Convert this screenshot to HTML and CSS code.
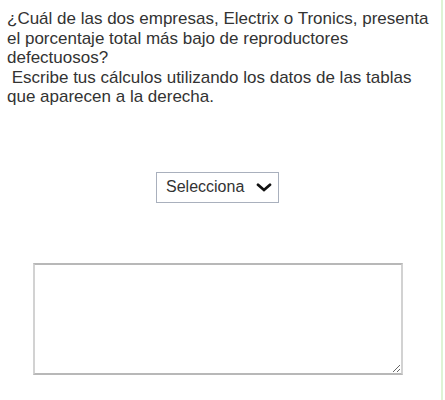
FILE: index.html
```html
<!DOCTYPE html>
<html lang="es">
<head>
    <meta charset="UTF-8">
    <meta name="viewport" content="width=device-width, initial-scale=1.0">
    <title>Pregunta</title>
    <link rel="stylesheet" href="styles.css">
</head>
<body>
    <div class="panel">
        <p class="question">¿Cuál de las dos empresas, Electrix o Tronics, presenta el porcentaje total más bajo de reproductores defectuosos?<br>&nbsp;Escribe tus cálculos utilizando los datos de las tablas que aparecen a la derecha.</p>

        <div class="answer">
            <div class="select-box">
                <span>Selecciona</span>
                <svg class="chevron" width="16" height="9" viewBox="0 0 16 9">
                    <path d="M2 1.8 L8 7 L14 1.8" fill="none" stroke="#111" stroke-width="2.8" stroke-linecap="round" stroke-linejoin="miter"/>
                </svg>
            </div>
        </div>

        <div class="work">
            <textarea class="work-area"></textarea>
        </div>
    </div>
</body>
</html>
```

FILE: styles.css
```css
body {
    margin: 0;
    background: white;
    font-family: 'Liberation Sans', Arial, sans-serif;
}
.panel {
    width: 441px;
    height: 400px;
    border-right: 2px solid #def3d4;
}
.question {
    margin: 0;
    padding: 9px 4px 0 7px;
    font-size: 17px;
    line-height: 19.5px;
    color: #333;
}
.answer {
    margin-top: 65px;
    padding-left: 156px;
}
.select-box {
    display: inline-flex;
    align-items: center;
    justify-content: space-between;
    box-sizing: border-box;
    width: 123px;
    height: 31px;
    border: 1px solid #a9b0bd;
    padding: 0 6px 0 9px;
    font-size: 16px;
    color: #333;
}
.chevron {
    display: block;
}
.work {
    margin-top: 60px;
    padding-left: 33px;
}
.work-area {
    display: block;
    width: 370px;
    height: 112px;
    box-sizing: border-box;
    margin: 0;
    border: 2px solid;
    border-color: #b8b8b8 #d2d2d2 #b8b8b8 #d2d2d2;
    resize: both;
}
```
